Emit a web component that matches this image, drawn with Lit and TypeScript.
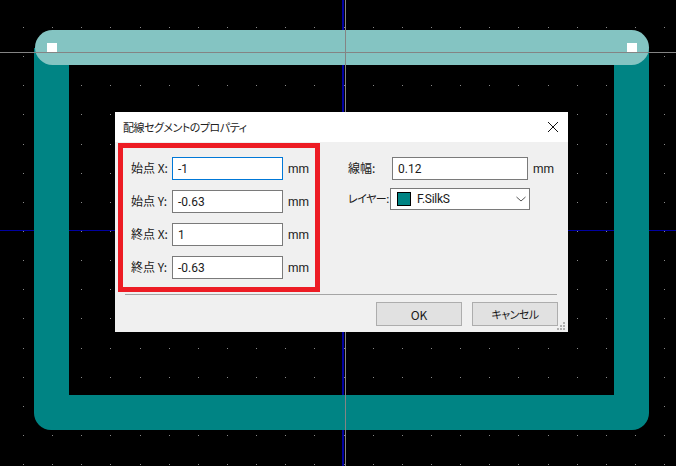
import { LitElement, html, css, svg } from "lit";
import { customElement } from "lit/decorators.js";

const xs = Array.from({ length: 23 }, (_, i) => 23.4 + i * 29.15);
const ys = Array.from({ length: 16 }, (_, i) => 27.4 + i * 29.15);

@customElement("pcb-canvas")
class PcbCanvas extends LitElement {
  static styles = css`
    :host { display: block; position: absolute; inset: 0; }
    svg { display: block; }
  `;
  render() {
    return html`<svg width="676" height="466" viewBox="0 0 676 466" shape-rendering="crispEdges">
      <rect width="676" height="466" fill="#000"/>
      <rect x="0" y="230" width="676" height="1" fill="#0000a0"/>
      <rect x="342" y="0" width="2" height="466" fill="#0000a0"/>
      ${ys.map((y) => xs.map((x) => svg`<rect x=${Math.floor(x)} y=${Math.floor(y)} width="1" height="1" fill="#8a8a8a"/>`))}
      <path d="M34 48V413A17 17 0 0 0 51 430H632A17 17 0 0 0 649 413V48H614V395H69V48Z" fill="#008484" shape-rendering="geometricPrecision"/>
      <rect x="35" y="30" width="614" height="35" rx="17.5" fill="#84c4c2" shape-rendering="geometricPrecision"/>
      <rect x="0" y="52" width="676" height="1" fill="#848484"/>
      <rect x="345" y="0" width="1" height="466" fill="#848484"/>
      <rect x="47" y="43" width="10" height="9" fill="#fff"/>
      <rect x="627" y="43" width="10" height="9" fill="#fff"/>
    </svg>`;
  }
}

@customElement("app-root")
class AppRoot extends LitElement {
  static styles = css`
    :host { display: block; position: relative; width: 676px; height: 466px; overflow: hidden;
      font-family: "Noto Sans CJK JP", "Noto Sans", sans-serif; font-size: 12px; color: #1a1a1a;
      font-feature-settings: "palt"; }
    .dialog { position: absolute; left: 115px; top: 112px; width: 453px; height: 220px;
      background: #f0f0f0; display: flex; flex-direction: column; }
    .title { height: 30px; flex: none; background: #fff; display: flex; align-items: center;
      justify-content: space-between; padding: 0 9px 0 8px; }
    .title-text { font-size: 11px; letter-spacing: -0.5px; color: #222; }
    .close { width: 12px; height: 12px; display: block; }
    .body { display: flex; height: 152px; flex: none; padding: 1px 0 0 3px; box-sizing: border-box; }
    .left { box-sizing: border-box; width: 202px; height: 149px; border: 5px solid #ed1c24;
      padding: 9px 0 0 8px; display: grid; grid-template-columns: 41px 111px auto;
      grid-auto-rows: 23px; row-gap: 10px; align-items: center; }
    .lab { white-space: nowrap; padding-bottom: 2px; }
    .lab.narrow { font-size: 11px; letter-spacing: -0.5px; }
    .input { box-sizing: border-box; width: 111px; height: 23px; background: #fff;
      border: 1px solid #7a7a7a; padding: 0 5px; display: flex; align-items: center;
      font-family: Roboto, "Noto Sans", sans-serif; font-size: 12px; }
    .input.focus { border-color: #0078d7; }
    .unit { margin-left: 5px; font-family: Roboto, sans-serif; font-size: 12px; }
    .right { padding: 14px 0 0 28px; display: grid; grid-template-columns: 44px 136px auto;
      row-gap: 8px; align-items: center; align-content: start; }
    .right .input { width: 136px; }
    .select { box-sizing: border-box; width: 140px; height: 22px; margin-left: -2px; background: #fff;
      border: 1px solid #7a7a7a; display: flex; align-items: center; padding: 0 3px 0 6px;
      font-family: Roboto, sans-serif; font-size: 12px; gap: 6px; }
    .layer-name { letter-spacing: -0.3px; }
    .swatch { box-sizing: border-box; width: 14px; height: 14px; background: #008484; border: 1px solid #000; flex: none; }
    .chev { margin-left: auto; width: 10px; height: 6px; display: block; }
    .sep { height: 1px; background: #a5a5a5; margin: 0 11px 0 10px; flex: none; }
    .foot { flex: 1; display: flex; justify-content: flex-end; gap: 10px; padding: 7px 10px 0 0; position: relative; }
    .btn { box-sizing: border-box; width: 86px; height: 24px; background: #e1e1e1; border: 1px solid #adadad;
      display: flex; align-items: center; justify-content: center; font-size: 12px; }
    .btn.kana { font-size: 11px; letter-spacing: -0.5px; }
    .grip { position: absolute; right: 2px; bottom: 1px; width: 10px; height: 10px; display: block; }
  `;
  private row(label: string, value: string, focus = false) {
    return html`<span class="lab">${label}</span>
      <div class="input ${focus ? "focus" : ""}">${value}</div>
      <span class="unit">mm</span>`;
  }
  render() {
    return html`<pcb-canvas></pcb-canvas>
      <div class="dialog">
        <div class="title">
          <span class="title-text">配線セグメントのプロパティ</span>
          <svg class="close" viewBox="0 0 12 12"><path d="M1 1L11 11M11 1L1 11" stroke="#111" stroke-width="1" fill="none"/></svg>
        </div>
        <div class="body">
          <div class="left">
            ${this.row("始点 X:", "-1", true)}
            ${this.row("始点 Y:", "-0.63")}
            ${this.row("終点 X:", "1")}
            ${this.row("終点 Y:", "-0.63")}
          </div>
          <div class="right">
            <span class="lab">線幅:</span>
            <div class="input">0.12</div>
            <span class="unit">mm</span>
            <span class="lab narrow">レイヤー:</span>
            <div class="select">
              <span class="swatch"></span><span class="layer-name">F.SilkS</span>
              <svg class="chev" viewBox="0 0 10 6"><path d="M0.5 1L5 5L9.5 1" stroke="#555" fill="none"/></svg>
            </div>
            <span></span>
          </div>
        </div>
        <div class="sep"></div>
        <div class="foot">
          <div class="btn">OK</div>
          <div class="btn kana">キャンセル</div>
          <svg class="grip" viewBox="0 0 10 10"><g fill="#b0b0b0"><rect x="7" y="1" width="2" height="2"/><rect x="4" y="4" width="2" height="2"/><rect x="7" y="4" width="2" height="2"/><rect x="1" y="7" width="2" height="2"/><rect x="4" y="7" width="2" height="2"/><rect x="7" y="7" width="2" height="2"/></g></svg>
        </div>
      </div>`;
  }
}
